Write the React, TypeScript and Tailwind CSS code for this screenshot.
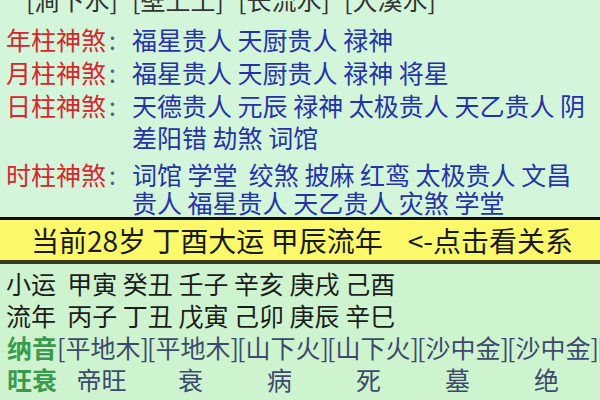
const NAYIN_TOP = ["[涧下水]", "[壁上土]", "[长流水]", "[大溪水]"];

const SHENSHA = [
  { label: "年柱神煞", items: "福星贵人 天厨贵人 禄神" },
  { label: "月柱神煞", items: "福星贵人 天厨贵人 禄神 将星" },
  { label: "日柱神煞", items: "天德贵人 元辰 禄神 太极贵人 天乙贵人 阴差阳错 劫煞 词馆" },
];

const NAYIN = ["平地木", "平地木", "山下火", "山下火", "沙中金", "沙中金"];
const WANGSHUAI = ["帝旺", "衰", "病", "死", "墓", "绝"];
const ZIZUO = ["长生", "墓", "冠带", "病", "死", "临官"];

function ShenshaRow({ label, items, className = "" }: { label: string; items: string; className?: string }) {
  return (
    <div className={`flex pr-[8px] ${className}`}>
      <div className="w-[132px] shrink-0 pl-[6px] text-[#d8262c] whitespace-nowrap">
        {label}
        <span className="ml-[3px] text-[#55607a]">:</span>
      </div>
      <div className="flex-1 text-[#2632a8] break-all whitespace-pre-wrap">{items}</div>
    </div>
  );
}

export default function App() {
  return (
    <div className="w-[600px] h-[400px] overflow-hidden font-['Noto_Sans_CJK_SC','Noto_Sans',sans-serif] text-[25px]">
      {/* 神煞 */}
      <div className="h-[217px] overflow-hidden bg-[#d3f6db]">
        <div className="flex pl-[26px] -mt-[17px] leading-[32px] text-[#333333]">
          {NAYIN_TOP.map((n) => (
            <div key={n} className="w-[106px] shrink-0">{n}</div>
          ))}
        </div>
        <div className="mt-[8px] flex flex-col gap-[1px] leading-[32px]">
          {SHENSHA.map((s) => (
            <ShenshaRow key={s.label} label={s.label} items={s.items} />
          ))}
        </div>
        <ShenshaRow
          className="mt-[7px] leading-[28px]"
          label="时柱神煞"
          items="词馆 学堂  绞煞 披麻 红鸾 太极贵人 文昌贵人 福星贵人 天乙贵人 灾煞 学堂"
        />
      </div>

      {/* 大运流年 */}
      <div className="h-[3px] bg-[#111111]" />
      <div className="h-[40px] bg-[#fcf96a] flex items-center pl-[31px] text-[28px] text-[#1a1a1a] whitespace-pre">
        {"当前28岁 丁酉大运 甲辰流年    <-点击看关系"}
      </div>
      <div className="h-[4px] bg-[#3a3a22]" />

      {/* 小运 流年 纳音 旺衰 */}
      <div className="h-[136px] bg-[#cdf4cf] pt-[3px] leading-[32px] text-[#1c1c1c] whitespace-nowrap overflow-hidden">
        <div className="pl-[6px] whitespace-pre">{"小运  甲寅 癸丑 壬子 辛亥 庚戌 己酉"}</div>
        <div className="pl-[6px] whitespace-pre">{"流年  丙子 丁丑 戊寅 己卯 庚辰 辛巳"}</div>
        <div className="flex pl-[7px] text-[#3d4a6c]">
          <span className="w-[50px] shrink-0 font-semibold text-[#3c9a4e]">纳音</span>
          {NAYIN.map((n, i) => (
            <span key={i} className="w-[90px] shrink-0">[{n}]</span>
          ))}
          <span className="shrink-0 text-[#9aa6b8]">[</span>
        </div>
        <div className="flex pl-[7px] text-[#3d4a6c]">
          <span className="w-[50px] shrink-0 font-semibold text-[#3c9a4e]">旺衰</span>
          {WANGSHUAI.map((w) => (
            <span key={w} className="w-[89px] shrink-0 text-center">{w}</span>
          ))}
        </div>
        <div className="flex pl-[7px] text-[#2a2a2a]">
          <span className="w-[50px] shrink-0">自坐</span>
          {ZIZUO.map((w, i) => (
            <span key={i} className="w-[89px] shrink-0 text-center">{w}</span>
          ))}
        </div>
      </div>
    </div>
  );
}
